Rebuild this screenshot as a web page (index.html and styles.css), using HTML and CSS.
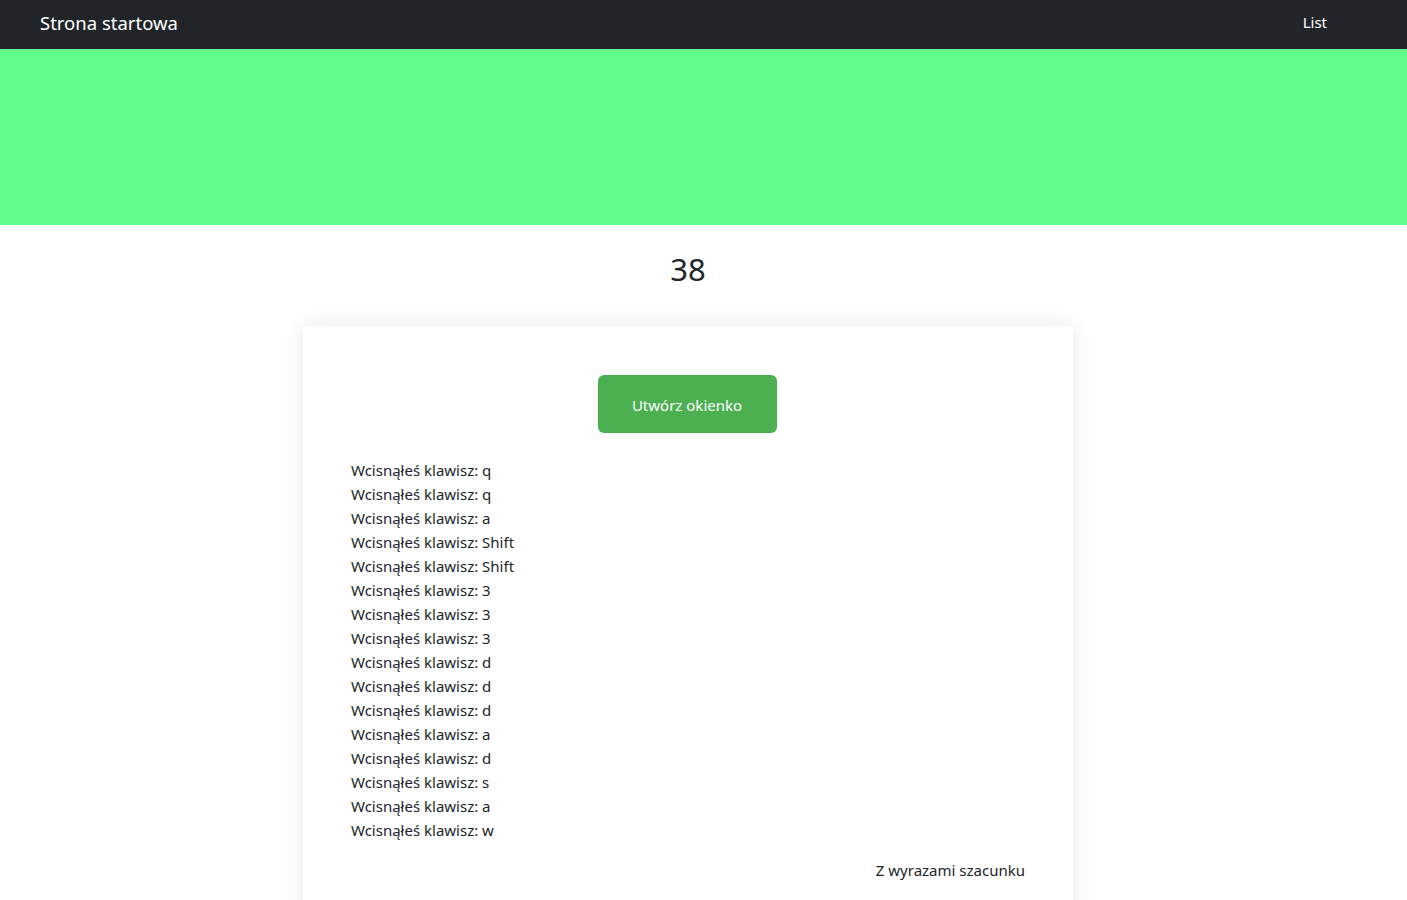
FILE: index.html
```html
<!DOCTYPE html>
<html lang="pl">
<head>
<meta charset="utf-8">
<title>Strona startowa</title>
<link rel="stylesheet" href="styles.css">
</head>
<body>
<nav class="navbar">
  <a class="brand" href="#">Strona startowa</a>
  <a class="nav-link" href="#">List</a>
</nav>
<header class="hero"></header>
<main class="main">
  <h1 class="counter">38</h1>
  <section class="card">
    <div class="actions">
      <button class="btn">Utwórz okienko</button>
    </div>
    <ul class="log">
      <li>Wcisnąłeś klawisz: q</li>
      <li>Wcisnąłeś klawisz: q</li>
      <li>Wcisnąłeś klawisz: a</li>
      <li>Wcisnąłeś klawisz: Shift</li>
      <li>Wcisnąłeś klawisz: Shift</li>
      <li>Wcisnąłeś klawisz: 3</li>
      <li>Wcisnąłeś klawisz: 3</li>
      <li>Wcisnąłeś klawisz: 3</li>
      <li>Wcisnąłeś klawisz: d</li>
      <li>Wcisnąłeś klawisz: d</li>
      <li>Wcisnąłeś klawisz: d</li>
      <li>Wcisnąłeś klawisz: a</li>
      <li>Wcisnąłeś klawisz: d</li>
      <li>Wcisnąłeś klawisz: s</li>
      <li>Wcisnąłeś klawisz: a</li>
      <li>Wcisnąłeś klawisz: w</li>
    </ul>
    <p class="signature">Z wyrazami szacunku</p>
  </section>
</main>
</body>
</html>
```

FILE: styles.css
```css
* { box-sizing: border-box; }
html, body { margin: 0; padding: 0; }
body {
  font-family: "Noto Sans", "Open Sans", sans-serif;
  font-size: 15px;
  line-height: 24px;
  color: #212529;
  background: #fff;
}
.navbar {
  height: 49px;
  background: #212529;
  display: flex;
  align-items: center;
  justify-content: space-between;
  padding: 0 80px 0 40px;
}
.brand {
  color: #fff;
  text-decoration: none;
  font-size: 18.5px;
  line-height: 30px;
  margin-bottom: 3px;
}
.nav-link {
  color: #fff;
  text-decoration: none;
  font-size: 15px;
  line-height: 24px;
  margin-bottom: 5px;
}
.hero {
  height: 176px;
  background: #5ffc8b;
}
.main {
  padding-right: 31px;
  display: flex;
  flex-direction: column;
  align-items: center;
}
.counter {
  margin: 24px 0 0;
  font-size: 31px;
  line-height: 40px;
  font-weight: 400;
}
.card {
  width: 770px;
  margin-top: 37px;
  background: #fff;
  box-shadow: 0 0 24px rgba(0, 0, 0, 0.09);
  border-radius: 3px;
  padding: 49px 48px 40px;
}
.actions {
  display: flex;
  justify-content: center;
}
.btn {
  width: 179px;
  height: 58px;
  margin-left: -2px;
  background: #4caf50;
  color: #fff;
  border: none;
  border-radius: 6px;
  font-family: inherit;
  font-size: 15px;
  padding: 1px 0 0;
  cursor: pointer;
}
.log {
  list-style: none;
  margin: 25px 0 0;
  padding: 0;
}
.signature {
  margin: 16px 0 0;
  text-align: right;
}
```
